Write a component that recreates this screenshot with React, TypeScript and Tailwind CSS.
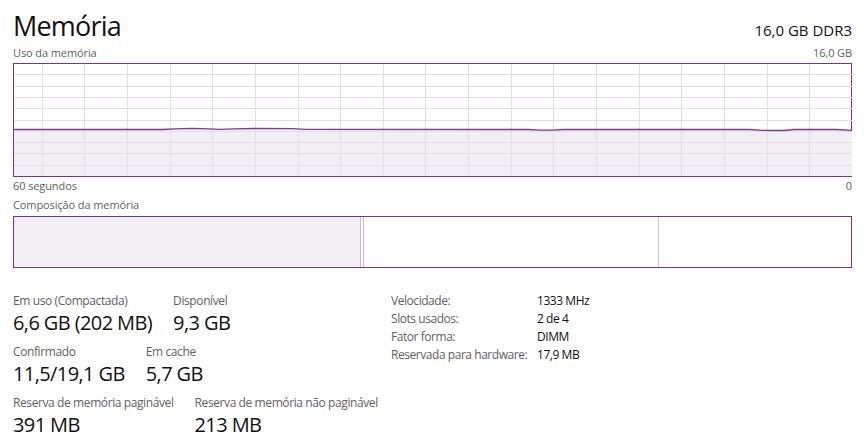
import React from "react";

const W = 838;
const H = 112;

function UsageChart() {
  const vLines = Array.from({ length: 19 }, (_, k) => Math.round(27.7 + k * 42.64) + 0.5);
  const hLines = Array.from({ length: 9 }, (_, n) => Math.round(11.3 * (n + 1) - 1) + 0.5);
  const pts: [number, number][] = [
    [0, 65.5], [148, 65.5], [162, 64.8], [178, 64.4], [194, 64.8], [206, 65.3], [220, 64.8],
    [240, 64.5], [278, 64.6], [292, 65.3], [515, 65.5], [526, 66.2], [538, 66.2], [550, 65.5],
    [736, 65.5], [748, 66.4], [770, 66.5], [780, 65.5], [822, 65.5], [838, 66.4],
  ];
  const line = pts.map((p) => p.join(",")).join(" ");
  const area = `0,${H} ${line} ${W},${H}`;
  return (
    <svg width={W} height={H} viewBox={`0 0 ${W} ${H}`} className="block">
      <polygon points={area} fill="#f2eff4" />
      {hLines.map((y) => (
        <line key={"h" + y} x1={0} x2={W} y1={y} y2={y} stroke="#e6dbe9" strokeWidth={1} shapeRendering="crispEdges" />
      ))}
      {vLines.map((x) => (
        <line key={"v" + x} x1={x} x2={x} y1={0} y2={H} stroke="#e6dbe9" strokeWidth={1} shapeRendering="crispEdges" />
      ))}
      <polyline points={line} fill="none" stroke="#7a3d8c" strokeWidth={1.3} />
    </svg>
  );
}

function Stat({ label, value }: { label: string; value: string }) {
  return (
    <div className="flex flex-col">
      <div className="text-[12px] leading-[14px] tracking-[-0.4px] text-[#5f5f5f] whitespace-nowrap">{label}</div>
      <div className="mt-[2px] text-[20px] leading-[26px] tracking-[-0.6px] text-[#111] whitespace-nowrap">{value}</div>
    </div>
  );
}

export default function App() {
  return (
    <div className="w-[866px] h-[443px] bg-white overflow-hidden pl-[13px] pr-[14px] font-['Open_Sans',sans-serif]">
      <div className="flex items-baseline justify-between mt-[8px] h-[36px]">
        <div className="text-[27px] leading-[36px] tracking-[-0.8px] text-[#111]">Memória</div>
        <div className="text-[15px] leading-[20px] text-[#111]">16,0 GB DDR3</div>
      </div>
      <div className="flex justify-between mt-[2px] text-[11px] leading-[14px] tracking-[-0.1px] text-[#5f5f5f]">
        <span>Uso da memória</span>
        <span>16,0 GB</span>
      </div>
      <div className="mt-[3px] h-[114px] border border-[#74358a]">
        <UsageChart />
      </div>
      <div className="flex justify-between mt-[2px] text-[11px] leading-[14px] tracking-[-0.1px] text-[#5f5f5f]">
        <span>60 segundos</span>
        <span>0</span>
      </div>
      <div className="mt-[5px] text-[11px] leading-[14px] tracking-[-0.1px] text-[#5f5f5f]">Composição da memória</div>
      <div className="mt-[4px] h-[52px] border border-[#74358a] flex">
        <div className="w-[347px] bg-[#f2eff4] border-r border-[#cdb3d6]" />
        <div className="w-[3px] border-r border-[#cdb3d6]" />
        <div className="w-[295px] border-r border-[#c9c3cc]" />
        <div className="flex-1" />
      </div>
      <div className="mt-[26px] flex">
        <div className="w-[378px] flex flex-col gap-[9px]">
          <div className="flex gap-[21px]">
            <Stat label="Em uso (Compactada)" value="6,6 GB (202 MB)" />
            <Stat label="Disponível" value="9,3 GB" />
          </div>
          <div className="flex gap-[21px]">
            <Stat label="Confirmado" value="11,5/19,1 GB" />
            <Stat label="Em cache" value="5,7 GB" />
          </div>
          <div className="flex gap-[21px]">
            <Stat label="Reserva de memória paginável" value="391 MB" />
            <Stat label="Reserva de memória não paginável" value="213 MB" />
          </div>
        </div>
        <div className="-mt-[2px] grid grid-cols-[146px_auto] auto-rows-[18px] text-[12px] leading-[18px] tracking-[-0.45px] h-fit whitespace-nowrap">
          <span className="text-[#5f5f5f]">Velocidade:</span>
          <span className="text-[#111]">1333 MHz</span>
          <span className="text-[#5f5f5f]">Slots usados:</span>
          <span className="text-[#111]">2 de 4</span>
          <span className="text-[#5f5f5f]">Fator forma:</span>
          <span className="text-[#111]">DIMM</span>
          <span className="text-[#5f5f5f]">Reservada para hardware:</span>
          <span className="text-[#111]">17,9 MB</span>
        </div>
      </div>
    </div>
  );
}
